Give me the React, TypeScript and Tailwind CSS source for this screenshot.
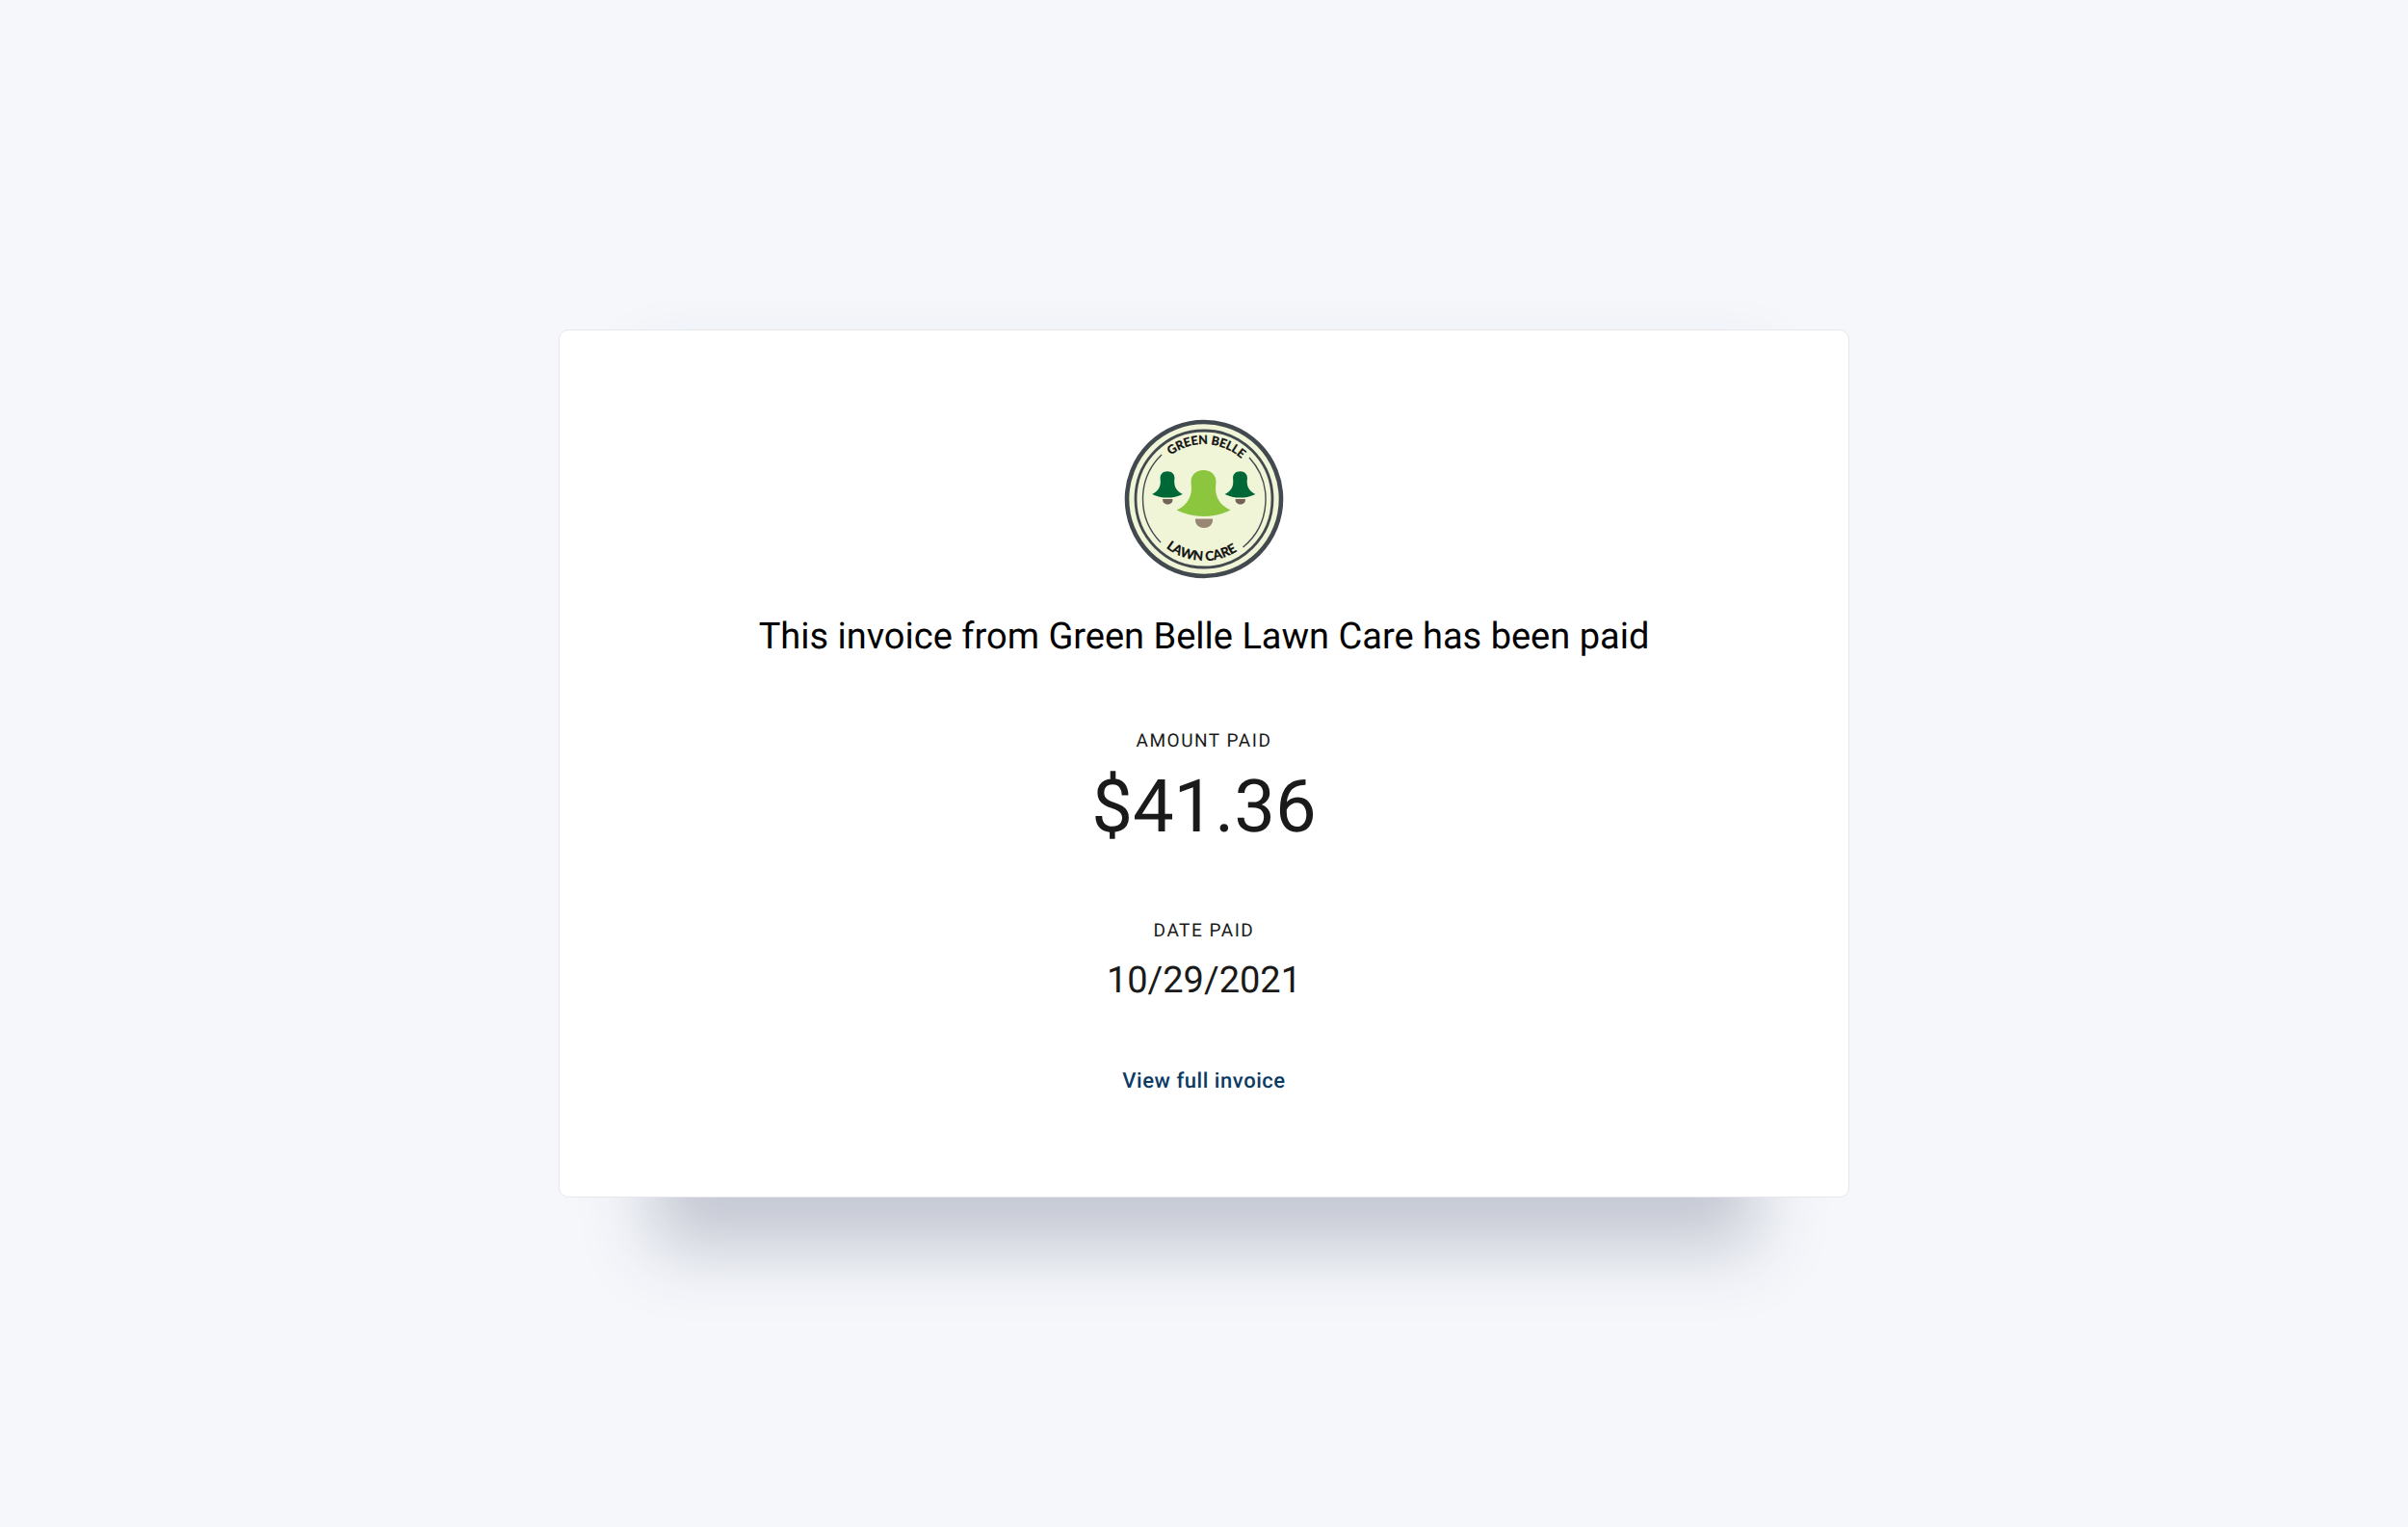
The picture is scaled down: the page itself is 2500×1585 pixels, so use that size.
function Bell({ fill, clapper }: { fill: string; clapper: string }) {
  return (
    <>
      <path
        fill={fill}
        d="M0 -24 C-8 -24 -13 -19 -13 -12 C-13 -10 -12.600 -8 -12.600 -5 C-12.600 5 -18 13 -28 17.500 C-11 26 11 26 28 17.500 C18 13 12.600 5 12.600 -5 C12.600 -8 13 -10 13 -12 C13 -19 8 -24 0 -24 Z"
      />
      <path fill={clapper} d="M-8.500 26.500 H9.500 V28 C9.500 33 5 36 0.500 36 C-4 36 -8.500 33 -8.500 28 Z" />
    </>
  );
}

function Logo() {
  return (
    <svg
      role="img"
      aria-label="Green Belle Lawn Care"
      viewBox="0 0 166 166"
      className="size-[166px]"
    >
      <defs>
        <path id="arc-top" d="M26 83 A57 57 0 0 1 140 83" />
        <path id="arc-bottom" d="M19 83 A64 64 0 0 0 147 83" />
      </defs>
      <circle cx="83" cy="83" r="80" fill="#f1f5d8" stroke="#434a4f" strokeWidth="4.600" />
      <circle cx="83" cy="83" r="71" fill="none" stroke="#434a4f" strokeWidth="2.800" />
      <path
        fill="none"
        stroke="#434a4f"
        strokeWidth="1.400"
        d="M39 37 A64 64 0 0 0 38 128 M130 40 A64 64 0 0 1 123.500 133"
      />
      <g
        fill="#111"
        stroke="#111"
        strokeWidth="0.300"
        fontFamily="Lato, sans-serif"
        fontWeight="700"
        textAnchor="middle"
      >
        <text fontSize="12.500">
          <textPath href="#arc-top" startOffset="51.500%">GREEN BELLE</textPath>
        </text>
        <text fontSize="13.500" className="[font-kerning:none]">
          <textPath href="#arc-bottom" startOffset="48.500%">LAWN CARE</textPath>
        </text>
      </g>
      <g transform="translate(82.500 77)">
        <Bell fill="#8cc63f" clapper="#998675" />
      </g>
      <g transform="translate(45 68) scale(.57)">
        <Bell fill="#006837" clapper="#736357" />
      </g>
      <g transform="translate(120.500 68) scale(.57)">
        <Bell fill="#006837" clapper="#736357" />
      </g>
    </svg>
  );
}

export default function App() {
  return (
    <main className="flex min-h-screen items-center justify-center bg-[#f5f7fb] p-6 font-[Roboto,sans-serif] [text-rendering:geometricPrecision]">
      <section className="flex w-full max-w-[1340px] flex-col items-center rounded-[10px] border border-[#e5e7ed] bg-white px-6 pt-[92px] pb-[103px] text-center text-[#1a1a1a] shadow-[0_150px_68px_-98px_rgba(52,60,88,0.25),0_-60px_60px_-80px_rgba(52,60,88,0.08)]">
        <Logo />
        <h1 className="mt-8 text-[38px] leading-[56px] text-black">
          This invoice from Green Belle Lawn Care has been paid
        </h1>
        <dl className="flex flex-col items-center">
          <dt className="mt-[68px] text-[19px] leading-6 tracking-[0.08em]">AMOUNT PAID</dt>
          <dd className="mt-3 text-[76px] leading-[88px]">$41.36</dd>
          <dt className="mt-[73px] text-[19px] leading-6 tracking-[0.08em]">DATE PAID</dt>
          <dd className="mt-3 text-[38px] leading-[56px]">10/29/2021</dd>
        </dl>
        <a href="#invoice" className="mt-[61px] text-[22px] leading-8 font-medium tracking-wide text-[#0b3a63]">
          View full invoice
        </a>
      </section>
    </main>
  );
}
